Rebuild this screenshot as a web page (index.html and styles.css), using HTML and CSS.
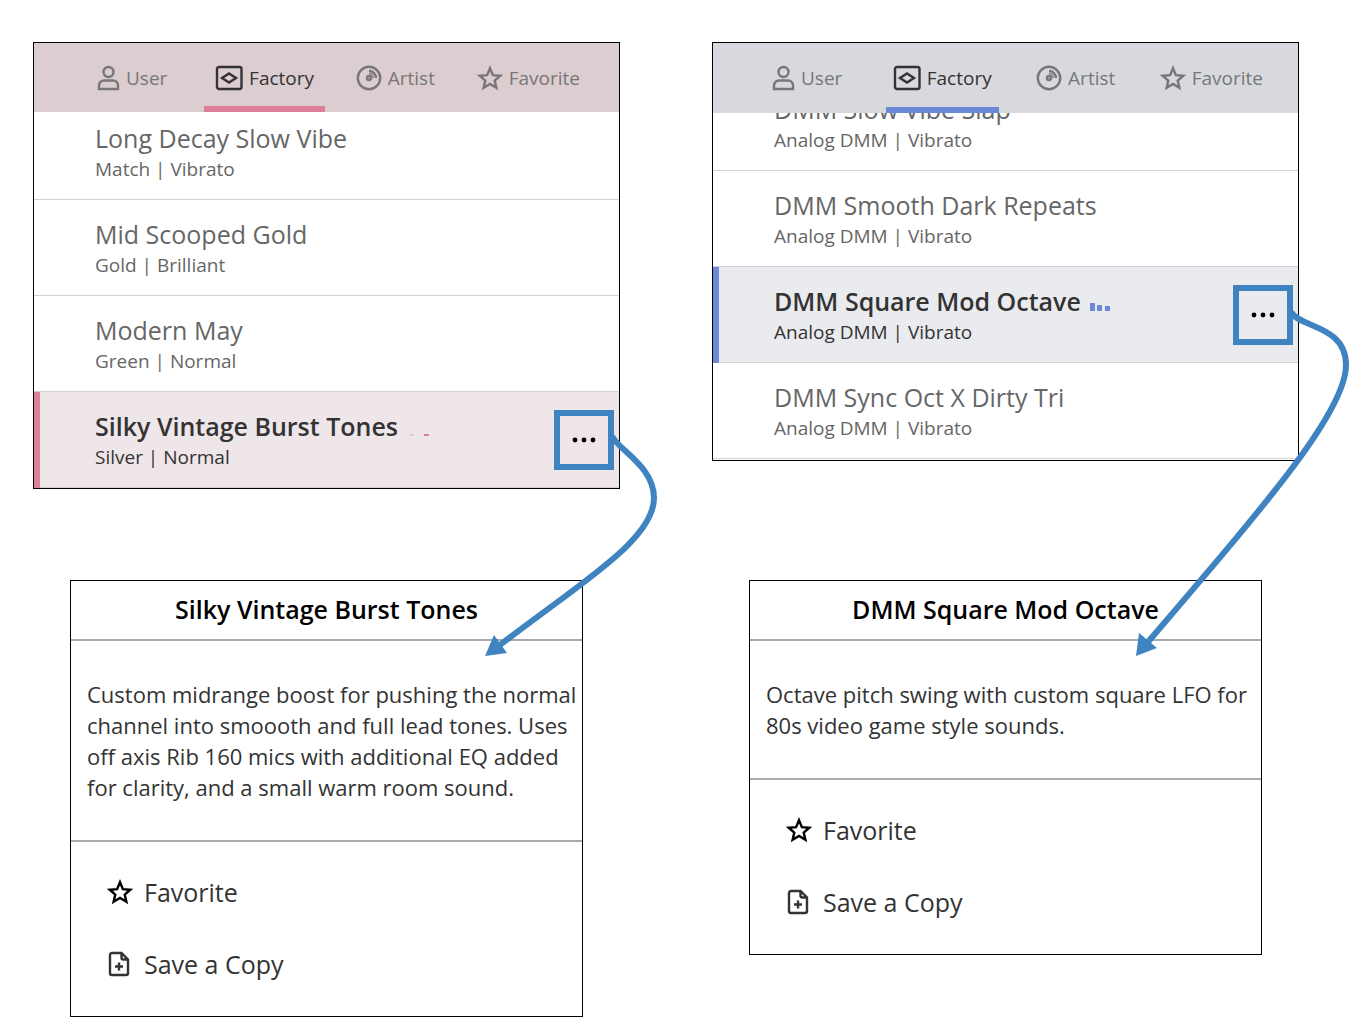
FILE: index.html
```html
<!DOCTYPE html>
<html lang="en">
<head>
    <meta charset="UTF-8">
    <meta name="viewport" content="width=device-width, initial-scale=1.0">
    <title>Preset Browser</title>
    <link rel="stylesheet" href="styles.css">
</head>
<body>
    <!-- Shared icons -->
    <svg class="icon-defs" aria-hidden="true">
        <symbol id="icon-user" viewBox="0 0 24 26">
            <circle cx="12.500" cy="7" r="5"/>
            <path d="M3 24v-3.500a5 5 0 0 1 5-5h9a5 5 0 0 1 5 5V24z"/>
        </symbol>
        <symbol id="icon-factory" viewBox="0 0 28 26">
            <rect x="2" y="2" width="24.500" height="22" rx="2"/>
            <path d="M7 13l7-4.500 7 4.500-7 4.500z"/>
        </symbol>
        <symbol id="icon-artist" viewBox="0 0 26 26">
            <circle cx="13" cy="13" r="11.200"/>
            <circle cx="13" cy="13" r="2"/>
            <path d="M13 6a7 7 0 0 1 7 7"/>
            <path stroke-width="1.200" d="M13 8.600a4.400 4.400 0 0 1 4.400 4.400"/>
        </symbol>
        <symbol id="icon-star" viewBox="0 0 26 26">
            <path d="M13 3.200l2.900 6.900 7.400.6-5.600 4.900 1.700 7.200L13 19l-6.400 3.800 1.700-7.200-5.600-4.900 7.400-.6z"/>
        </symbol>
        <symbol id="icon-copy" viewBox="0 0 24 26">
            <path d="M13.500 2H4a2 2 0 0 0-2 2v18a2 2 0 0 0 2 2h14a2 2 0 0 0 2-2V8.500zM13.500 2v4.500a2 2 0 0 0 2 2H20M11 11.500v8M7 15.500h8"/>
        </symbol>
        <symbol id="icon-more" viewBox="0 0 24 6">
            <circle cx="3" cy="3" r="2.400"/>
            <circle cx="12" cy="3" r="2.400"/>
            <circle cx="21" cy="3" r="2.400"/>
        </symbol>
    </svg>

    <main class="board">
        <section class="panel panel-pink">
            <nav class="tabs">
                <button class="tab"><svg class="icon icon-narrow"><use href="#icon-user"/></svg>User</button>
                <button class="tab active"><svg class="icon icon-wide"><use href="#icon-factory"/></svg>Factory</button>
                <button class="tab"><svg class="icon"><use href="#icon-artist"/></svg>Artist</button>
                <button class="tab"><svg class="icon"><use href="#icon-star"/></svg>Favorite</button>
            </nav>
            <ul class="presets">
                <li class="preset">
                    <div class="info"><h3>Long Decay Slow Vibe</h3><p>Match | Vibrato</p></div>
                </li>
                <li class="preset">
                    <div class="info"><h3>Mid Scooped Gold</h3><p>Gold | Brilliant</p></div>
                </li>
                <li class="preset">
                    <div class="info"><h3>Modern May</h3><p>Green | Normal</p></div>
                </li>
                <li class="preset selected">
                    <div class="info">
                        <h3>Silky Vintage Burst Tones
                            <svg class="meter" viewBox="0 0 22 10"><path class="faint" d="M2 8.500h5v1H2z"/><path d="M17 8h5v2h-5z"/></svg>
                        </h3>
                        <p>Silver | Normal</p>
                    </div>
                    <button class="more" aria-label="More"><svg class="dots"><use href="#icon-more"/></svg></button>
                </li>
            </ul>
            <svg class="arrow arrow-pink" viewBox="480 430 180 230">
                <path class="line" d="M612 436C617 449 654 466 654 498C654 540 580 583 500 645"/>
                <path class="head" d="M485 656l9-21 13 18z"/>
            </svg>
        </section>

        <section class="panel panel-blue">
            <nav class="tabs">
                <button class="tab"><svg class="icon icon-narrow"><use href="#icon-user"/></svg>User</button>
                <button class="tab active"><svg class="icon icon-wide"><use href="#icon-factory"/></svg>Factory</button>
                <button class="tab"><svg class="icon"><use href="#icon-artist"/></svg>Artist</button>
                <button class="tab"><svg class="icon"><use href="#icon-star"/></svg>Favorite</button>
            </nav>
            <ul class="presets">
                <li class="preset">
                    <div class="info"><h3>DMM Slow Vibe Slap</h3><p>Analog DMM | Vibrato</p></div>
                </li>
                <li class="preset">
                    <div class="info"><h3>DMM Smooth Dark Repeats</h3><p>Analog DMM | Vibrato</p></div>
                </li>
                <li class="preset selected">
                    <div class="info">
                        <h3>DMM Square Mod Octave
                            <svg class="meter" viewBox="0 0 22 10"><path d="M1 2h5v8H1zM8 4h5v6H8zM16 5h5v5h-5z"/></svg>
                        </h3>
                        <p>Analog DMM | Vibrato</p>
                    </div>
                    <button class="more" aria-label="More"><svg class="dots"><use href="#icon-more"/></svg></button>
                </li>
                <li class="preset">
                    <div class="info"><h3>DMM Sync Oct X Dirty Tri</h3><p>Analog DMM | Vibrato</p></div>
                </li>
            </ul>
            <svg class="arrow arrow-blue" viewBox="1130 305 222 355">
                <path class="line" d="M1291 312C1300 328 1346 325 1346 365C1346 412 1265 505 1148 642"/>
                <path class="head" d="M1136 656l3-23 18 15z"/>
            </svg>
        </section>

        <section class="card">
            <h2>Silky Vintage Burst Tones</h2>
            <p class="description">Custom midrange boost for pushing the normal channel into smoooth and full lead tones. Uses off axis Rib 160 mics with additional EQ added for clarity, and a small warm room sound.</p>
            <div class="actions">
                <button class="action"><svg class="icon icon-star"><use href="#icon-star"/></svg>Favorite</button>
                <button class="action"><svg class="icon icon-copy"><use href="#icon-copy"/></svg>Save a Copy</button>
            </div>
        </section>

        <section class="card">
            <h2>DMM Square Mod Octave</h2>
            <p class="description">Octave pitch swing with custom square LFO for 80s video game style sounds.</p>
            <div class="actions">
                <button class="action"><svg class="icon icon-star"><use href="#icon-star"/></svg>Favorite</button>
                <button class="action"><svg class="icon icon-copy"><use href="#icon-copy"/></svg>Save a Copy</button>
            </div>
        </section>
    </main>
</body>
</html>
```
FILE: styles.css
```css
* {
    box-sizing: border-box;
}
body {
    margin: 0;
    background: #fff;
    color: #333;
    font-family: "Open Sans", "Noto Sans", sans-serif;
}
h2, h3, p, ul {
    margin: 0;
    padding: 0;
}
button {
    background: none;
    border: none;
    padding: 0;
    color: inherit;
    font-family: inherit;
    cursor: pointer;
}
.icon-defs {
    position: absolute;
    width: 0;
    height: 0;
}
.board {
    display: grid;
    grid-template-columns: 1fr 1fr;
    gap: 91px 92px;
    align-items: start;
    padding: 42px 60px 18px 33px;
}

/* preset list */
.panel {
    position: relative;
    border: 1px solid #000;
}
.panel-pink {
    --bar: #dccdd0;
    --row: #efe6e9;
    --accent: #de7f98;
    --tab-padding: 11px;
    --tab-height: 69px;
    --scroll: -8px;
}
.panel-blue {
    --bar: #d8d9de;
    --row: #eaebef;
    --accent: #6c89d8;
    --tab-padding: 7px;
    --tab-height: 70px;
    --scroll: -38px;
    padding-bottom: 1px;
}
.tabs {
    display: flex;
    justify-content: space-between;
    height: var(--tab-height);
    padding: 0 28px 0 51px;
    background: var(--bar);
}
.tab {
    display: flex;
    align-items: center;
    gap: 6px;
    padding: 6px var(--tab-padding) 0;
    border-bottom: 6px solid transparent;
    color: #777;
    font-size: 19px;
}
.tab:first-child {
    margin-right: 6px;
}
.tab.active {
    border-color: var(--accent);
    color: #333;
}
.icon {
    width: 26px;
    height: 26px;
    fill: none;
    stroke: currentColor;
    stroke-width: 2.4;
}
.icon-narrow {
    width: 24px;
}
.icon-wide {
    width: 28px;
}
.presets {
    list-style: none;
    overflow: hidden;
}
.preset {
    position: relative;
    display: flex;
    align-items: center;
    justify-content: space-between;
    height: 96px;
    padding: 0 5px 0 61px;
    border-bottom: 1px solid #d3d1d4;
    color: #666;
}
.preset:first-child {
    margin-top: var(--scroll);
}
.preset h3 {
    font-size: 25px;
    font-weight: 400;
    line-height: 34px;
}
.preset p {
    font-size: 19px;
    line-height: 28px;
}
.preset.selected {
    background: var(--row);
    color: #333;
}
.preset.selected h3 {
    font-weight: 600;
}
.preset.selected::before {
    content: "";
    position: absolute;
    top: 0;
    bottom: -1px;
    left: 0;
    width: 6px;
    background: var(--accent);
}
.meter {
    width: 22px;
    height: 10px;
    margin-left: 2px;
    fill: var(--accent);
}
.meter .faint {
    opacity: 0.5;
}
.more {
    display: flex;
    align-items: center;
    justify-content: center;
    width: 60px;
    height: 60px;
    border: 6px solid #3f84c0;
}
.dots {
    width: 24px;
    height: 6px;
    fill: #000;
}

/* arrows from the menu button to its card */
.arrow {
    position: absolute;
    z-index: 1;
    pointer-events: none;
}
.arrow-pink {
    top: 387px;
    right: -41px;
    width: 180px;
    height: 230px;
}
.arrow-blue {
    top: 262px;
    right: -54px;
    width: 222px;
    height: 355px;
}
.arrow .line {
    fill: none;
    stroke: #3f84c0;
    stroke-width: 6;
}
.arrow .head {
    fill: #3f84c0;
}

/* preset details */
.card {
    margin: 0 37px;
    border: 1px solid #000;
}
.card h2 {
    padding-bottom: 2px;
    border-bottom: 2px solid #aaa;
    color: #000;
    font-size: 25px;
    font-weight: 600;
    line-height: 56px;
    text-align: center;
}
.description {
    padding: 38px 0 37px 16px;
    border-bottom: 2px solid #aaa;
    font-size: 22px;
    line-height: 31px;
}
.actions {
    display: flex;
    flex-direction: column;
    padding: 14px 36px 16px;
}
.action {
    display: flex;
    align-items: center;
    gap: 11px;
    height: 72px;
    font-size: 25px;
}
.icon-star {
    stroke: #000;
}
```
